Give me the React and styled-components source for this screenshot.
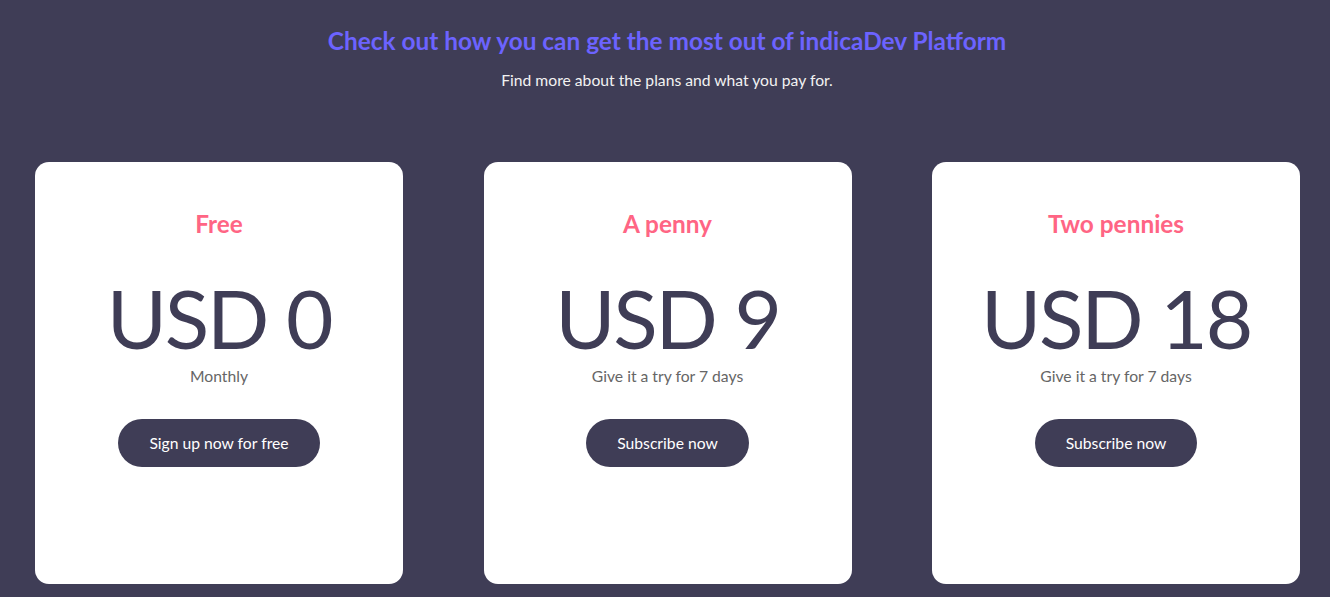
import React from 'react';
import styled, { createGlobalStyle } from 'styled-components';

const GlobalStyle = createGlobalStyle`
  html, body {
    margin: 0;
    padding: 0;
    background: #3f3d56;
    font-family: Lato, "Open Sans", sans-serif;
  }
`;

const Page = styled.main`
  min-height: 597px;
  padding: 26px 35px 0;
  box-sizing: border-box;
  background: #3f3d56;
`;

const Header = styled.header`
  display: flex;
  flex-direction: column;
  align-items: center;
  text-align: center;
`;

const Heading = styled.h1`
  margin: 0 0 0 4px;
  font-size: 24.4px;
  line-height: 29px;
  font-weight: 700;
  color: #6c63ff;
`;

const Subtitle = styled.p`
  margin: 16px 0 0 4px;
  font-size: 15.7px;
  line-height: 18px;
  color: #f2f2f2;
`;

const Plans = styled.section`
  display: flex;
  gap: 80.5px;
  margin-top: 73px;
`;

const Card = styled.article`
  width: 368px;
  height: 422px;
  flex-shrink: 0;
  box-sizing: border-box;
  padding-top: 47px;
  background: #fff;
  border-radius: 14px;
  display: flex;
  flex-direction: column;
  align-items: center;
`;

const PlanName = styled.h2`
  margin: 0;
  font-size: 24.4px;
  line-height: 29px;
  font-weight: 700;
  color: #ff6584;
`;

const Price = styled.div`
  margin-top: 30px;
  font-size: 82px;
  line-height: 98px;
  letter-spacing: -2.2px;
  font-weight: 400;
  color: #3f3d56;
`;

const Period = styled.div`
  margin-top: 1px;
  font-size: 15.7px;
  line-height: 18px;
  color: #666;
`;

const ActionButton = styled.button`
  margin-top: 34px;
  height: 48px;
  padding: 0 31px;
  border: none;
  border-radius: 24px;
  background: #3f3d56;
  color: #fff;
  font-family: inherit;
  font-size: 15.7px;
  cursor: pointer;
`;

const plans = [
  { name: 'Free', price: 'USD 0', period: 'Monthly', action: 'Sign up now for free' },
  { name: 'A penny', price: 'USD 9', period: 'Give it a try for 7 days', action: 'Subscribe now' },
  { name: 'Two pennies', price: 'USD 18', period: 'Give it a try for 7 days', action: 'Subscribe now' },
];

export default function App() {
  return (
    <>
      <GlobalStyle />
      <Page>
        <Header>
          <Heading>Check out how you can get the most out of indicaDev Platform</Heading>
          <Subtitle>Find more about the plans and what you pay for.</Subtitle>
        </Header>
        <Plans>
          {plans.map(plan => (
            <Card key={plan.name}>
              <PlanName>{plan.name}</PlanName>
              <Price>{plan.price}</Price>
              <Period>{plan.period}</Period>
              <ActionButton>{plan.action}</ActionButton>
            </Card>
          ))}
        </Plans>
      </Page>
    </>
  );
}
